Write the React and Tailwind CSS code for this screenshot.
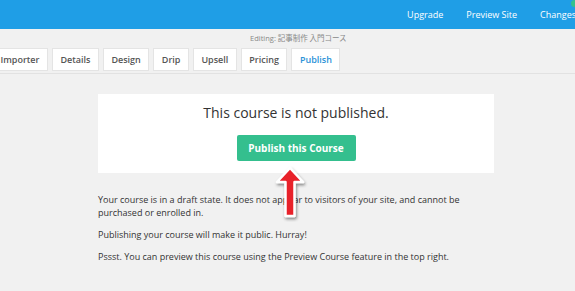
const TABS = ["Importer", "Details", "Design", "Drip", "Upsell", "Pricing", "Publish"];

function Arrow() {
  return (
    <svg
      className="absolute left-[273px] top-[164px]"
      width="36"
      height="58"
      viewBox="0 0 36 58"
    >
      <defs>
        <filter id="sh" x="-50%" y="-50%" width="200%" height="200%">
          <feDropShadow dx="1" dy="2" stdDeviation="1.5" floodColor="#000" floodOpacity="0.45" />
        </filter>
      </defs>
      <path
        d="M17 4 L30 18 L21.5 18 L21.5 52 L12.5 52 L12.5 18 L4 18 Z"
        fill="#e8202a"
        stroke="#fff"
        strokeWidth="2.5"
        strokeLinejoin="round"
        filter="url(#sh)"
      />
    </svg>
  );
}

export default function App() {
  return (
    <div className="relative w-[575px] h-[291px] overflow-hidden bg-[#f1f1f1] font-['Open_Sans',sans-serif] text-[#333]">
      <div className="h-[29px] bg-[#1f9ee6] flex items-center justify-end">
        <nav className="flex items-center gap-[23px] text-[9px] text-white mr-[-1px]">
          <span>Upgrade</span>
          <span>Preview Site</span>
          <span className="relative">
            Changes
            <span className="absolute -top-[8px] right-[-2px] w-[7px] h-[7px] rounded-full bg-[#35c08d]" />
          </span>
        </nav>
      </div>

      <div className="ml-[250px] mt-[3px] text-[7.5px] text-[#888] leading-[12px]">
        Editing: <span className="font-['Noto_Sans_CJK_JP',sans-serif]">記事制作 入門コース</span>
      </div>

      <div className="border-b border-[#e2e2e2] pb-[2px] mt-[4px]">
        <div className="flex gap-[4px] ml-[-8px]">
          {TABS.map((t) => (
            <div
              key={t}
              className={`h-[23px] px-[7.5px] flex items-center bg-white border border-[#e4e4e4] text-[9px] font-semibold ${
                t === "Publish" ? "text-[#2a92d8]" : "text-[#555]"
              }`}
            >
              {t}
            </div>
          ))}
        </div>
      </div>

      <div className="ml-[98px] w-[396px] mt-[20px]">
        <div className="bg-white h-[79px] flex flex-col items-center pt-[8px]">
          <h1 className="text-[14px] leading-[22px] text-[#333]">This course is not published.</h1>
          <button className="mt-[11px] w-[119px] h-[26px] rounded-[2px] bg-[#34bf8e] text-white text-[10px] font-bold">
            Publish this Course
          </button>
        </div>

        <div className="mt-[20px] text-[9px] leading-[13px] text-[#333] space-y-[9px]">
          <p>
            Your course is in a draft state. It does not appear to visitors of your site, and cannot be purchased or
            enrolled in.
          </p>
          <p>Publishing your course will make it public. Hurray!</p>
          <p>Pssst. You can preview this course using the Preview Course feature in the top right.</p>
        </div>
      </div>

      <Arrow />
    </div>
  );
}
